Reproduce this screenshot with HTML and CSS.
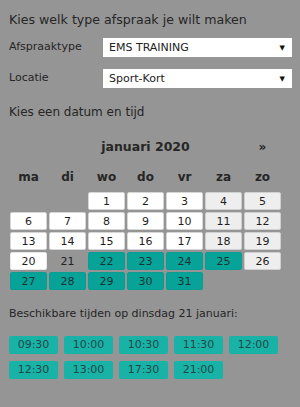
FILE: index.html
```html
<!DOCTYPE html>
<html lang="nl">
<head>
<meta charset="utf-8">
<title>Afspraak maken</title>
<link rel="stylesheet" href="styles.css">
</head>
<body>
<main class="page">
  <h1 class="title">Kies welk type afspraak je wilt maken</h1>
  <div class="field first">
    <label class="label">Afspraaktype</label>
    <div class="select"><span>EMS TRAINING</span><span class="arrow">▼</span></div>
  </div>
  <div class="field">
    <label class="label">Locatie</label>
    <div class="select"><span>Sport-Kort</span><span class="arrow">▼</span></div>
  </div>

  <h2 class="subtitle">Kies een datum en tijd</h2>

  <section class="calendar">
    <div class="month">januari 2020</div>
    <div class="next">»</div>
    <div class="dow">ma</div><div class="dow">di</div><div class="dow">wo</div><div class="dow">do</div><div class="dow">vr</div><div class="dow">za</div><div class="dow">zo</div>

    <div class="blank"></div><div class="blank"></div>
    <div class="day">1</div><div class="day">2</div><div class="day">3</div><div class="day we">4</div><div class="day we">5</div>
    <div class="day">6</div><div class="day">7</div><div class="day">8</div><div class="day">9</div><div class="day">10</div><div class="day we">11</div><div class="day we">12</div>
    <div class="day">13</div><div class="day">14</div><div class="day">15</div><div class="day">16</div><div class="day">17</div><div class="day we">18</div><div class="day we">19</div>
    <div class="day today">20</div><div class="day sel">21</div><div class="day av">22</div><div class="day av">23</div><div class="day av">24</div><div class="day av">25</div><div class="day we">26</div>
    <div class="day av">27</div><div class="day av">28</div><div class="day av">29</div><div class="day av">30</div><div class="day av">31</div>
  </section>

  <p class="avail">Beschikbare tijden op dinsdag 21 januari:</p>
  <div class="times">
    <button class="time">09:30</button>
    <button class="time">10:00</button>
    <button class="time">10:30</button>
    <button class="time">11:30</button>
    <button class="time">12:00</button>
    <button class="time">12:30</button>
    <button class="time">13:00</button>
    <button class="time">17:30</button>
    <button class="time">21:00</button>
  </div>
</main>
</body>
</html>
```
FILE: styles.css
```css
html, body {
  margin: 0;
  padding: 0;
  background: #959595;
}
body {
  font-family: "DejaVu Sans", Verdana, sans-serif;
  color: #262626;
}
.page {
  padding: 11px 8px 0 9px;
}
.title {
  margin: 0;
  font-size: 12.6px;
  font-weight: normal;
  line-height: 17px;
}
.field {
  display: flex;
  align-items: center;
  height: 19px;
  margin-top: 12px;
}
.field.first {
  margin-top: 10px;
}
.label {
  width: 94px;
  font-size: 11px;
  line-height: 15px;
  margin-top: -3px;
}
.select {
  display: flex;
  align-items: center;
  justify-content: space-between;
  width: 189px;
  height: 19px;
  box-sizing: border-box;
  padding: 0 7px 0 6px;
  background: #fff;
  font-size: 11px;
  color: #222;
}
.arrow {
  font-size: 7px;
  color: #111;
}
.subtitle {
  margin: 16px 0 0;
  font-size: 12px;
  font-weight: normal;
  line-height: 16px;
}
.calendar {
  display: grid;
  grid-template-columns: repeat(7, 37px);
  column-gap: 2px;
  row-gap: 2px;
  margin: 18px 0 0 1px;
  font-size: 11px;
}
.month {
  grid-column: 1 / 7;
  padding-left: 39px;
  text-align: center;
  font-weight: bold;
  font-size: 12.5px;
  line-height: 18px;
}
.next {
  text-align: center;
  font-weight: bold;
  font-size: 12px;
  line-height: 18px;
}
.dow {
  text-align: center;
  font-weight: bold;
  font-size: 12px;
  line-height: 16px;
  margin: 11px 0 5px;
}
.day {
  height: 18px;
  line-height: 17px;
  box-sizing: border-box;
  text-align: center;
  background: #fff;
  border: 1px solid #d6d6d6;
  border-radius: 2px;
  color: #1e1e1e;
}
.day.we {
  background: #eeeeee;
  border-color: #d0d0d0;
}
.day.today {
  background: #fff;
  border-color: #e8e8e8;
}
.day.sel {
  background: transparent;
  border-color: transparent;
  color: #222;
}
.day.av {
  background: #07a398;
  border-color: #0a9d93;
  color: #173332;
}
.avail {
  margin: 16px 0 0;
  font-size: 11px;
  line-height: 15px;
}
.times {
  display: grid;
  grid-template-columns: repeat(5, 49px);
  column-gap: 6px;
  row-gap: 7px;
  margin-top: 15px;
}
.time {
  height: 18px;
  padding: 0;
  border: 0;
  border-radius: 2px;
  background: #18b2a7;
  color: #1f4a47;
  font-family: "DejaVu Sans", Verdana, sans-serif;
  font-size: 11px;
  line-height: 18px;
}
```
